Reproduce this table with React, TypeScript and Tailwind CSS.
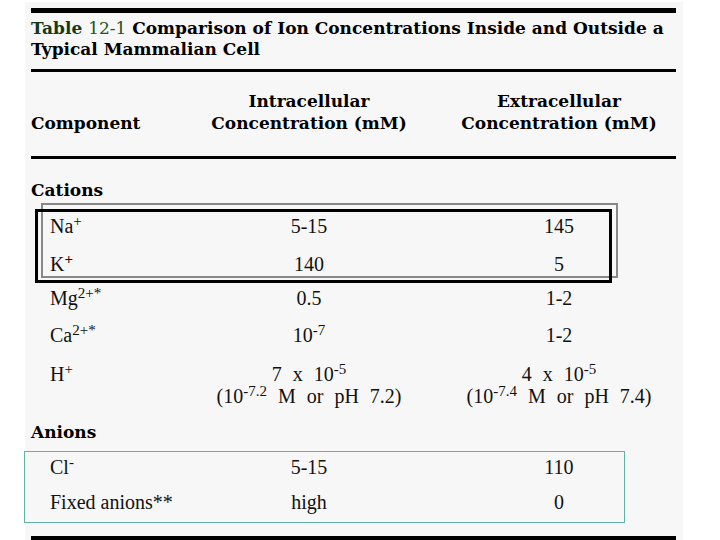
import * as React from "react";

const bold = "font-['DejaVu_Serif',serif] font-bold text-[17px] text-black";
const reg = "font-['Liberation_Serif',serif] text-[20px] text-[#111]";

interface RowProps {
  name: React.ReactNode;
  intra: React.ReactNode;
  extra: React.ReactNode;
  height: string;
}

const Row: React.FC<RowProps> = ({ name, intra, extra, height }) => (
  <div className={`grid grid-cols-[145px_266px_234px] ${reg} ${height}`}>
    <div className="pl-[19px] whitespace-nowrap">{name}</div>
    <div className="text-center whitespace-nowrap">{intra}</div>
    <div className="text-center whitespace-nowrap">{extra}</div>
  </div>
);

export default function App() {
  return (
    <div className="w-[720px] h-[540px] bg-white overflow-hidden">
      <div className="relative ml-[25px] mt-[2px] w-[658px] h-[538px] bg-[#f7f7f7] pl-[6px] pr-[7px] pt-[6px]">
        <div className="h-[5px] bg-black" />

        <div className="mt-[5px] font-['DejaVu_Serif',serif] font-bold text-[17px] leading-[21px] text-black whitespace-nowrap">
          <div>
            <span className="text-[#163816]">Table</span>{" "}
            <span className="font-normal text-[#245224]">12-1</span> Comparison of Ion Concentrations Inside and Outside a
          </div>
          <div>Typical Mammalian Cell</div>
        </div>

        <div className="mt-[9px] h-[3px] bg-black" />

        <div className={`grid grid-cols-[145px_266px_234px] items-end pt-[18px] leading-[22px] ${bold}`}>
          <div>Component</div>
          <div className="text-center">
            Intracellular
            <br />
            Concentration (mM)
          </div>
          <div className="text-center">
            Extracellular
            <br />
            Concentration (mM)
          </div>
        </div>

        <div className="mt-[22px] h-[3px] bg-black" />

        <div className={`mt-[14px] h-[34px] leading-[34px] ${bold}`}>Cations</div>

        <Row height="h-[38px] leading-[38px]" name={<>Na<sup>+</sup></>} intra="5-15" extra="145" />
        <Row height="h-[38px] leading-[38px]" name={<>K<sup className="font-bold">+</sup></>} intra="140" extra="5" />
        <Row height="h-[30px] leading-[30px]" name={<>Mg<sup>2+*</sup></>} intra="0.5" extra="1-2" />
        <Row height="h-[44px] leading-[44px]" name={<>Ca<sup>2+*</sup></>} intra={<>10<sup>-7</sup></>} extra="1-2" />

        <div className={`grid grid-cols-[145px_266px_234px] pt-[6px] leading-[22px] ${reg}`}>
          <div className="pl-[19px]">
            H<sup>+</sup>
          </div>
          <div className="text-center whitespace-nowrap [word-spacing:6px]">
            7 x 10<sup>-5</sup>
            <br />
            (10<sup>-7.2</sup> M or pH 7.2)
          </div>
          <div className="text-center whitespace-nowrap [word-spacing:6px]">
            4 x 10<sup>-5</sup>
            <br />
            (10<sup>-7.4</sup> M or pH 7.4)
          </div>
        </div>

        <div className={`mt-[7px] h-[36px] leading-[36px] ${bold}`}>Anions</div>

        <Row height="h-[34px] leading-[34px]" name={<>Cl<sup>-</sup></>} intra="5-15" extra="110" />
        <Row height="h-[36px] leading-[36px]" name="Fixed anions**" intra="high" extra="0" />

        <div className="mt-[16px] h-[4px] bg-black" />

        {/* highlight boxes drawn over the rows */}
        <div className="absolute left-[16px] top-[201px] w-[577px] h-[75px] border-2 border-[#888]" />
        <div className="absolute left-[10px] top-[207px] w-[577px] h-[74px] border-[3px] border-black" />
        <div className="absolute left-[-1px] top-[449px] w-[601px] h-[72px] border border-[#5fb4a6]" />
      </div>
    </div>
  );
}
